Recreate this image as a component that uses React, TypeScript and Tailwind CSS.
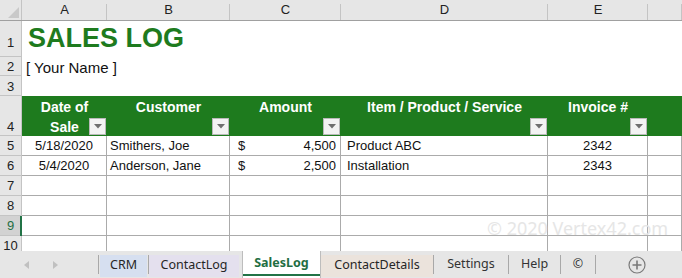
import { ReactNode } from 'react';

const cellW = ['w-[85px]', 'w-[123px]', 'w-[111px]', 'w-[207px]', 'w-[100px]', 'flex-1'];
const letters = ['A', 'B', 'C', 'D', 'E', ''];

const sales = [
  { date: '5/18/2020', customer: 'Smithers, Joe', amount: '4,500', item: 'Product ABC', invoice: '2342' },
  { date: '5/4/2020', customer: 'Anderson, Jane', amount: '2,500', item: 'Installation', invoice: '2343' },
];

function RowHead({ n, h, pad, active }: { n: number; h: string; pad: string; active?: boolean }) {
  return (
    <div
      className={`relative w-[22px] shrink-0 ${h} flex items-end justify-center ${pad} border-r border-b border-[#c4c4c4] text-[13px] leading-[15px] ${
        active ? 'bg-[#d2d2d2] text-[#1f6e43]' : 'bg-[#e6e6e6] text-[#222]'
      }`}
    >
      {n}
      {active && <div className="absolute right-[-1px] top-0 bottom-[-1px] w-[2px] bg-[#217346]" />}
    </div>
  );
}

function FilterBtn() {
  return (
    <div className="absolute right-[1px] bottom-[1px] w-[17px] h-[17px] bg-[#f3f3f3] border border-[#b9b9b9] flex items-center justify-center">
      <svg width="8" height="5" viewBox="0 0 8 5">
        <path d="M0 0 L8 0 L4 4.5 Z" fill="#6f6f6f" />
      </svg>
    </div>
  );
}

function HeadCell({ w, children }: { w: string; children: ReactNode }) {
  return (
    <div className={`relative ${w} h-full flex flex-col items-center text-white font-bold text-[14px] leading-[20px] pt-[1px]`}>
      {children}
      <FilterBtn />
    </div>
  );
}

function BodyRow({ n, h = 'h-[20px]', active, cells }: { n: number; h?: string; active?: boolean; cells?: ReactNode[] }) {
  return (
    <div className={`flex ${h}`}>
      <RowHead n={n} h={h} pad="pb-[2px]" active={active} />
      {cellW.map((w, i) => (
        <div key={i} className={`${w} ${h} border-r border-b border-[#ababab] text-[13px] text-[#111] flex items-center overflow-hidden`}>
          {cells ? cells[i] : null}
        </div>
      ))}
    </div>
  );
}

function Sep() {
  return <div className="w-[1px] h-[19px] bg-[#a8a8a8] shrink-0" />;
}

export default function App() {
  return (
    <div className="relative w-[682px] h-[278px] overflow-hidden bg-white font-['Liberation_Sans',Arial,sans-serif]">
      {/* column letters */}
      <div className="flex h-[21px] bg-[#e6e6e6] border-b border-[#a0a0a0]">
        <div className="w-[22px] h-full border-r border-[#c4c4c4] relative">
          <svg className="absolute right-[2px] bottom-[2px]" width="11" height="11" viewBox="0 0 11 11">
            <path d="M11 0 L11 11 L0 11 Z" fill="#c9c9c9" />
          </svg>
        </div>
        {cellW.map((w, i) => (
          <div key={i} className={`${w} h-full flex items-center justify-center text-[13px] text-[#222] relative`}>
            {letters[i]}
            <div className="absolute right-0 top-[4px] bottom-0 w-[1px] bg-[#c4c4c4]" />
          </div>
        ))}
      </div>

      {/* row 1 */}
      <div className="flex h-[36px]">
        <RowHead n={1} h="h-[36px]" pad="pb-[6px]" />
        <div className="pl-[6px] pt-[2px] text-[27px] leading-[30px] font-bold text-[#1e7b1e]">SALES LOG</div>
      </div>
      {/* row 2 */}
      <div className="flex h-[19px]">
        <RowHead n={2} h="h-[19px]" pad="pb-[1px]" />
        <div className="pl-[4px] pt-[1px] text-[15px] leading-[19px] text-[#111]">[ Your Name ]</div>
      </div>
      {/* row 3 */}
      <div className="flex h-[20px]">
        <RowHead n={3} h="h-[20px]" pad="pb-[1px]" />
      </div>
      {/* row 4 header */}
      <div className="flex h-[40px]">
        <RowHead n={4} h="h-[40px]" pad="pb-[1px]" />
        <div className="flex flex-1 h-full bg-[#1e7b1e]">
          <HeadCell w="w-[85px]">
            <span>Date of</span>
            <span>Sale</span>
          </HeadCell>
          <HeadCell w="w-[123px]">Customer</HeadCell>
          <HeadCell w="w-[111px]">Amount</HeadCell>
          <HeadCell w="w-[207px]">Item / Product / Service</HeadCell>
          <HeadCell w="w-[100px]">Invoice #</HeadCell>
        </div>
      </div>

      {sales.map((s, i) => (
        <BodyRow
          key={s.invoice}
          n={5 + i}
          cells={[
            <span className="w-full text-center">{s.date}</span>,
            <span className="pl-[3px]">{s.customer}</span>,
            <div className="w-full flex justify-between pl-[8px] pr-[4px]">
              <span>$</span>
              <span>{s.amount}</span>
            </div>,
            <span className="pl-[6px]">{s.item}</span>,
            <span className="w-full text-center">{s.invoice}</span>,
            null,
          ]}
        />
      ))}
      <BodyRow n={7} />
      <BodyRow n={8} />
      <BodyRow n={9} active />
      <BodyRow n={10} />

      {/* watermark */}
      <div className="absolute left-[487px] top-[215px] text-[18px] leading-[26px] text-[#e6e6e6] font-['Noto_Sans',sans-serif] pointer-events-none">
        © 2020 Vertex42.com
      </div>

      {/* sheet tabs */}
      <div className="absolute left-0 right-0 top-[251px] bottom-0 bg-[#e6e6e6] flex items-center font-['Noto_Sans',sans-serif] text-[12.5px] text-[#262626]">
        <div className="w-[98px] h-full flex items-center">
          <svg className="ml-[24px]" width="5" height="8" viewBox="0 0 5 8">
            <path d="M5 0 L5 8 L0 4 Z" fill="#c0c0c0" />
          </svg>
          <svg className="ml-[24px]" width="5" height="8" viewBox="0 0 5 8">
            <path d="M0 0 L0 8 L5 4 Z" fill="#c0c0c0" />
          </svg>
        </div>
        <Sep />
        <div className="ml-[1px] w-[47px] h-[22px] mt-[2px] bg-[#d6dff0] flex items-center justify-center">CRM</div>
        <div className="ml-[1px]"><Sep /></div>
        <div className="w-[90px] h-[22px] mt-[2px] bg-[#e4e0ee] flex items-center justify-center">ContactLog</div>
        <div className="ml-[3px] w-[79px] h-full self-start bg-white border-l border-r border-[#bdbdbd] relative flex items-center justify-center pb-[2px] font-bold text-[#1f6e43]">
          SalesLog
          <div className="absolute left-0 right-0 bottom-[2px] h-[2px] bg-[#217346]" />
        </div>
        <div className="w-[112px] h-[22px] mt-[2px] bg-[#ebe3dc] flex items-center justify-center">ContactDetails</div>
        <Sep />
        <div className="w-[74px] flex justify-center text-[#333]">Settings</div>
        <Sep />
        <div className="w-[51px] flex justify-center text-[#333]">Help</div>
        <Sep />
        <div className="w-[34px] flex justify-center text-[#333]">©</div>
        <Sep />
        <div className="flex-1 flex justify-center pr-[4px]">
          <svg width="18" height="18" viewBox="0 0 18 18">
            <circle cx="9" cy="9" r="8" fill="none" stroke="#7a7a7a" strokeWidth="1.2" />
            <path d="M9 4.5 V13.5 M4.5 9 H13.5" stroke="#7a7a7a" strokeWidth="1.6" />
          </svg>
        </div>
      </div>
    </div>
  );
}
